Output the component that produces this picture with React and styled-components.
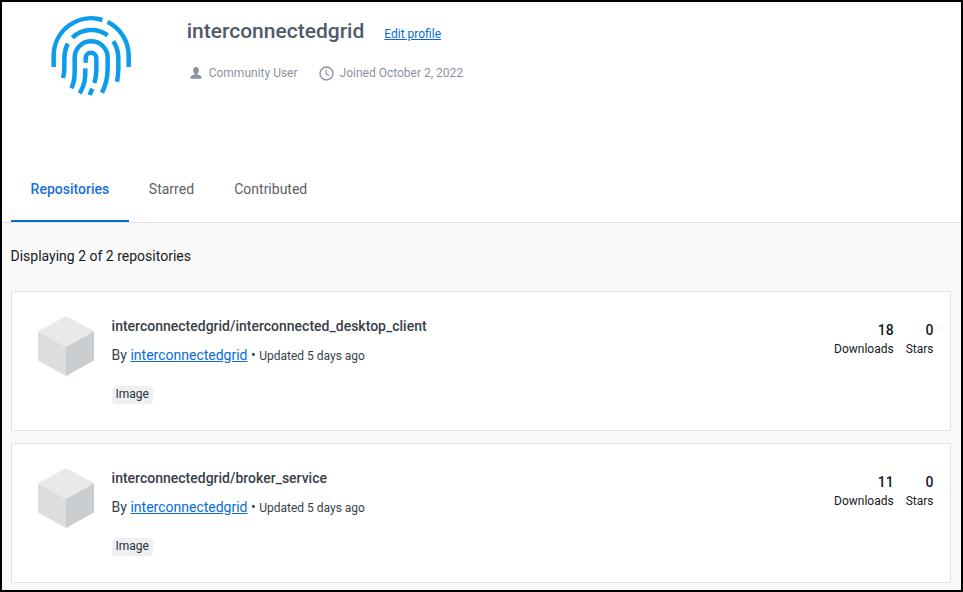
import React from "react";
import styled, { createGlobalStyle } from "styled-components";

const GlobalStyle = createGlobalStyle`
  * { box-sizing: border-box; }
  body { margin: 0; }
`;

const Page = styled.div`
  width: 963px;
  height: 592px;
  border: 2px solid #000;
  background: #f9f9f9;
  font-family: Roboto, "Liberation Sans", sans-serif;
  font-size: 14px;
  color: #17191e;
  overflow: hidden;
`;

const Header = styled.header`
  height: 221px;
  display: flex;
  flex-direction: column;
  justify-content: space-between;
  background: #fff;
  border-bottom: 1px solid #dfe1e6;
`;

const Profile = styled.div`
  display: flex;
  padding: 13px 0 0 48px;
`;

const ProfileText = styled.div`
  margin-left: 54.7px;
`;

const NameRow = styled.div`
  display: flex;
  align-items: baseline;
  gap: 20px;
  height: 32px;
  line-height: 32px;
`;

const Name = styled.h1`
  margin: 0;
  font-size: 21px;
  font-weight: 500;
  color: #505a69;
`;

const Link = styled.a`
  color: #086dd7;
  font-size: ${(p) => p.$size}px;
  text-decoration: underline;
`;

const MetaRow = styled.div`
  display: flex;
  gap: 21.5px;
  margin-top: 18px;
  padding-left: 3px;
`;

const Meta = styled.span`
  display: flex;
  align-items: center;
  gap: ${(p) => p.$gap}px;
  height: 16px;
  font-size: 12px;
  color: #8993a5;
`;

const Tabs = styled.nav`
  display: flex;
  padding-left: 9px;
`;

const Tab = styled.button`
  height: 66px;
  padding: 2px ${(p) => (p.$active ? 19.6 : 20.1)}px 0;
  border: 0;
  border-bottom: 2px solid ${(p) => (p.$active ? "#086dd7" : "transparent")};
  background: none;
  font: ${(p) => (p.$active ? 500 : 400)} 14px Roboto, sans-serif;
  color: ${(p) => (p.$active ? "#1b6ed6" : "#5c6066")};
`;

const Content = styled.main`
  padding: 0 10px 0 9px;
`;

const Summary = styled.p`
  margin: 0 0 0 -0.5px;
  padding-top: 24px;
  height: 68px;
  line-height: 19px;
`;

const Card = styled.article`
  display: flex;
  height: 140px;
  margin-bottom: 12px;
  padding: 23px 16.5px 0 25px;
  background: #fff;
  border: 1px solid #e1e2e6;
  border-radius: 2px;
`;

const Details = styled.div`
  flex: 1;
  margin-left: 16.6px;
  padding-top: 1px;
  color: #393f49;
`;

const RepoName = styled.h2`
  margin: 0;
  font-size: 14px;
  line-height: 20px;
  font-weight: 500;
`;

const Byline = styled.div`
  margin-top: 9px;
  line-height: 20px;
`;

const Updated = styled.span`
  font-size: 12px;
`;

const Tag = styled.span`
  display: block;
  width: 41px;
  height: 18px;
  margin-top: 20px;
  border-radius: 4px;
  background: #efeff2;
  font-size: 12px;
  line-height: 16px;
  text-align: center;
  color: #27303b;
`;

const Stats = styled.div`
  display: flex;
  gap: 12px;
  padding-top: 5px;
  text-align: right;
`;

const Count = styled.div`
  font-weight: 500;
  line-height: 20px;
`;

const StatLabel = styled.div`
  font-size: 12px;
  line-height: 18px;
`;

const Avatar = () => (
  <svg width="82" height="82" viewBox="30 30 246 246" fill="none" stroke="#0d9cec" strokeWidth="13.5">
    <path d="M41 186V152A112.5 112.5 0 0 1 187 45" />
    <path d="M203 51A112.5 112.5 0 0 1 266 152V186" />
    <path d="M97 98A82 82 0 0 1 203 91" />
    <path d="M83 116C75 133 73 145 73 160V190Q73 205 69 219" />
    <path d="M220 109C231 126 235 142 235 160V190Q235 211 231 230" />
    <path d="M94 250Q104 230 104 200V158A49.5 49.5 0 0 1 203 158V190Q203 230 186 263" />
    <path d="M137 173V159A16 16 0 0 1 169 159V196Q169 216 163 234" />
    <path d="M136 190C137 223 133 241 119 265" />
    <path d="M157 251L149 270" />
  </svg>
);

const UserIcon = () => (
  <svg width="12" height="14" viewBox="0 0 12 14" fill="#8993a5">
    <path d="M6 1C4.2 1 3.1 2.2 3.1 4c0 1.6.5 2.7 1.5 3.4v1L1.5 9.6Q.4 10.2.4 12.7h11.2q0-2.5-1.1-3.1L7.4 8.4v-1C8.4 6.7 8.9 5.6 8.9 4 8.9 2.2 7.8 1 6 1z" />
  </svg>
);

const ClockIcon = () => (
  <svg width="15" height="15" viewBox="0 0 15 15" fill="none" stroke="#8993a5" strokeWidth="1.4">
    <circle cx="7.5" cy="7.5" r="6.5" />
    <path d="M7.2 3.6V7.9L10 9.6" strokeWidth="1.2" />
  </svg>
);

const CubeIcon = () => (
  <svg width="58" height="62" viewBox="0 0 58 62">
    <path d="M29 1L57 16.2L29 32L1 16.2Z" fill="#e8e9eb" />
    <path d="M1 16.2L29 32V61L1 45.5Z" fill="#dcdddf" />
    <path d="M57 16.2L29 32V61L57 45.5Z" fill="#cbced1" />
  </svg>
);

const repositories = [
  { name: "interconnected_desktop_client", downloads: 18, stars: 0 },
  { name: "broker_service", downloads: 11, stars: 0 },
];

export default function App() {
  return (
    <Page>
      <GlobalStyle />
      <Header>
        <Profile>
          <Avatar />
          <ProfileText>
            <NameRow>
              <Name>interconnectedgrid</Name>
              <Link $size={12}>Edit profile</Link>
            </NameRow>
            <MetaRow>
              <Meta $gap={7}><UserIcon />Community User</Meta>
              <Meta $gap={5.5}><ClockIcon />Joined October 2, 2022</Meta>
            </MetaRow>
          </ProfileText>
        </Profile>
        <Tabs>
          <Tab $active>Repositories</Tab>
          <Tab>Starred</Tab>
          <Tab>Contributed</Tab>
        </Tabs>
      </Header>
      <Content>
        <Summary>Displaying 2 of 2 repositories</Summary>
        {repositories.map((repo) => (
          <Card key={repo.name}>
            <CubeIcon />
            <Details>
              <RepoName>interconnectedgrid/{repo.name}</RepoName>
              <Byline>
                By <Link $size={14}>interconnectedgrid</Link> • <Updated>Updated 5 days ago</Updated>
              </Byline>
              <Tag>Image</Tag>
            </Details>
            <Stats>
              <div>
                <Count>{repo.downloads}</Count>
                <StatLabel>Downloads</StatLabel>
              </div>
              <div>
                <Count>{repo.stars}</Count>
                <StatLabel>Stars</StatLabel>
              </div>
            </Stats>
          </Card>
        ))}
      </Content>
    </Page>
  );
}
